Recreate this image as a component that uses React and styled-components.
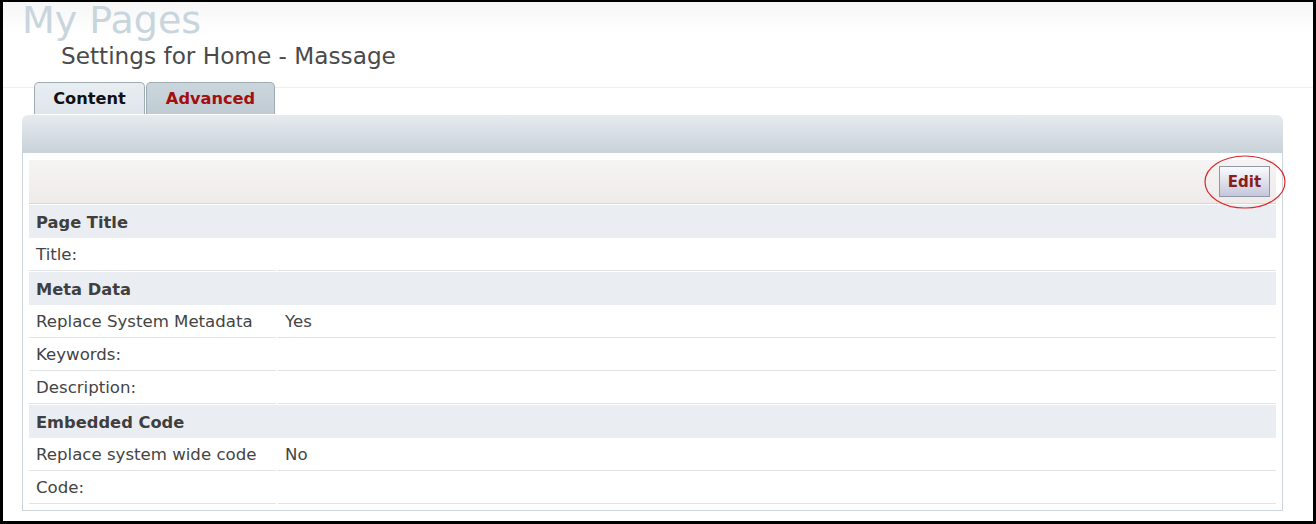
import React from 'react';
import styled, { createGlobalStyle } from 'styled-components';

const GlobalStyle = createGlobalStyle`
  html, body {
    margin: 0;
    padding: 0;
    background: #fff;
  }
  body {
    font-family: "DejaVu Sans", Verdana, sans-serif;
  }
  * {
    box-sizing: border-box;
  }
`;

const Frame = styled.div`
  width: 1316px;
  height: 524px;
  border: 3px solid #000;
  border-top-width: 2px;
  background: #fff;
  overflow: hidden;
`;

const Header = styled.header`
  display: flex;
  flex-direction: column;
  align-items: flex-start;
  height: 86px;
  border-bottom: 1px solid #efefef;
  background: linear-gradient(#f6f6f6, #fff 32px);
`;

const Heading = styled.h1`
  margin: 0 0 0 19px;
  font-size: 38px;
  line-height: 36px;
  font-weight: normal;
  color: #c9d5dd;
`;

const SubHeading = styled.h2`
  margin: 4px 0 0 58px;
  font-size: 23.2px;
  line-height: 28px;
  font-weight: normal;
  color: #4a4a4a;
`;

const TabRow = styled.nav`
  position: relative;
  display: flex;
  gap: 1px;
  margin-top: -6px;
  padding-left: 31px;
`;

const Tab = styled.div`
  width: ${(p) => p.$w}px;
  height: 32px;
  display: flex;
  align-items: center;
  justify-content: center;
  border: 1px solid #9eabb5;
  border-bottom: none;
  border-radius: 5px 5px 0 0;
  font-size: 16.2px;
  font-weight: bold;
  color: ${(p) => (p.$active ? '#111' : '#a30f0f')};
  background: ${(p) =>
    p.$active
      ? 'linear-gradient(#e8edf1, #dfe6eb)'
      : 'linear-gradient(#cbd5dc, #c0ccd4)'};
`;

const Panel = styled.section`
  margin: 1px 30px 0 19px;
`;

const PanelHead = styled.div`
  height: 38px;
  border-radius: 6px 6px 0 0;
  background: linear-gradient(#e6ebef, #c8d2d9);
`;

const PanelBody = styled.div`
  display: grid;
  grid-template-columns: 247px 1fr;
  column-gap: 2px;
  row-gap: 1px;
  padding: 7px 6px 6px;
  border: 1px solid #cdd5db;
  border-top: none;
`;

const Toolbar = styled.div`
  grid-column: 1 / -1;
  height: 44px;
  display: flex;
  align-items: center;
  justify-content: flex-end;
  padding-right: 6px;
  border-bottom: 1px solid #d9d6d6;
  background: linear-gradient(#f5f3f3, #efebeb);
`;

const EditWrap = styled.div`
  position: relative;
`;

const EditButton = styled.button`
  width: 51px;
  height: 31px;
  padding: 0;
  border: 1px solid #9098a8;
  background: linear-gradient(#fbfbfd, #c4c7dc);
  font-family: "DejaVu Sans", Verdana, sans-serif;
  font-size: 15px;
  font-weight: bold;
  color: #8a1c1c;
  cursor: pointer;
`;

const Circle = styled.svg`
  position: absolute;
  left: -15px;
  top: -11px;
  pointer-events: none;
`;

const SectionTitle = styled.div`
  grid-column: 1 / -1;
  height: 33px;
  display: flex;
  align-items: center;
  padding: 2px 7px 0;
  background: #eaedf2;
  font-size: 16.3px;
  font-weight: bold;
  color: #3f3f3f;
`;

const Cell = styled.div`
  height: 32px;
  display: flex;
  align-items: center;
  padding: 0 7px;
  border-bottom: 1px solid #e1e4e7;
  font-size: 16.6px;
  color: #444;
`;

const sections = [
  { title: 'Page Title', rows: [['Title:', '']] },
  {
    title: 'Meta Data',
    rows: [
      ['Replace System Metadata', 'Yes'],
      ['Keywords:', ''],
      ['Description:', ''],
    ],
  },
  {
    title: 'Embedded Code',
    rows: [
      ['Replace system wide code', 'No'],
      ['Code:', ''],
    ],
  },
];

export default function App() {
  return (
    <Frame>
      <GlobalStyle />
      <Header>
        <Heading>My Pages</Heading>
        <SubHeading>Settings for Home - Massage</SubHeading>
      </Header>
      <TabRow>
        <Tab $active $w={111}>Content</Tab>
        <Tab $w={129}>Advanced</Tab>
      </TabRow>
      <Panel>
        <PanelHead />
        <PanelBody>
          <Toolbar>
            <EditWrap>
              <EditButton>Edit</EditButton>
              <Circle width="82" height="54" viewBox="0 0 82 54">
                <ellipse cx="41" cy="27" rx="40" ry="26" fill="none" stroke="#d9252b" strokeWidth="1.2" />
              </Circle>
            </EditWrap>
          </Toolbar>
          {sections.map((s) => (
            <React.Fragment key={s.title}>
              <SectionTitle>{s.title}</SectionTitle>
              {s.rows.map(([label, value]) => (
                <React.Fragment key={label}>
                  <Cell>{label}</Cell>
                  <Cell>{value}</Cell>
                </React.Fragment>
              ))}
            </React.Fragment>
          ))}
        </PanelBody>
      </Panel>
    </Frame>
  );
}
